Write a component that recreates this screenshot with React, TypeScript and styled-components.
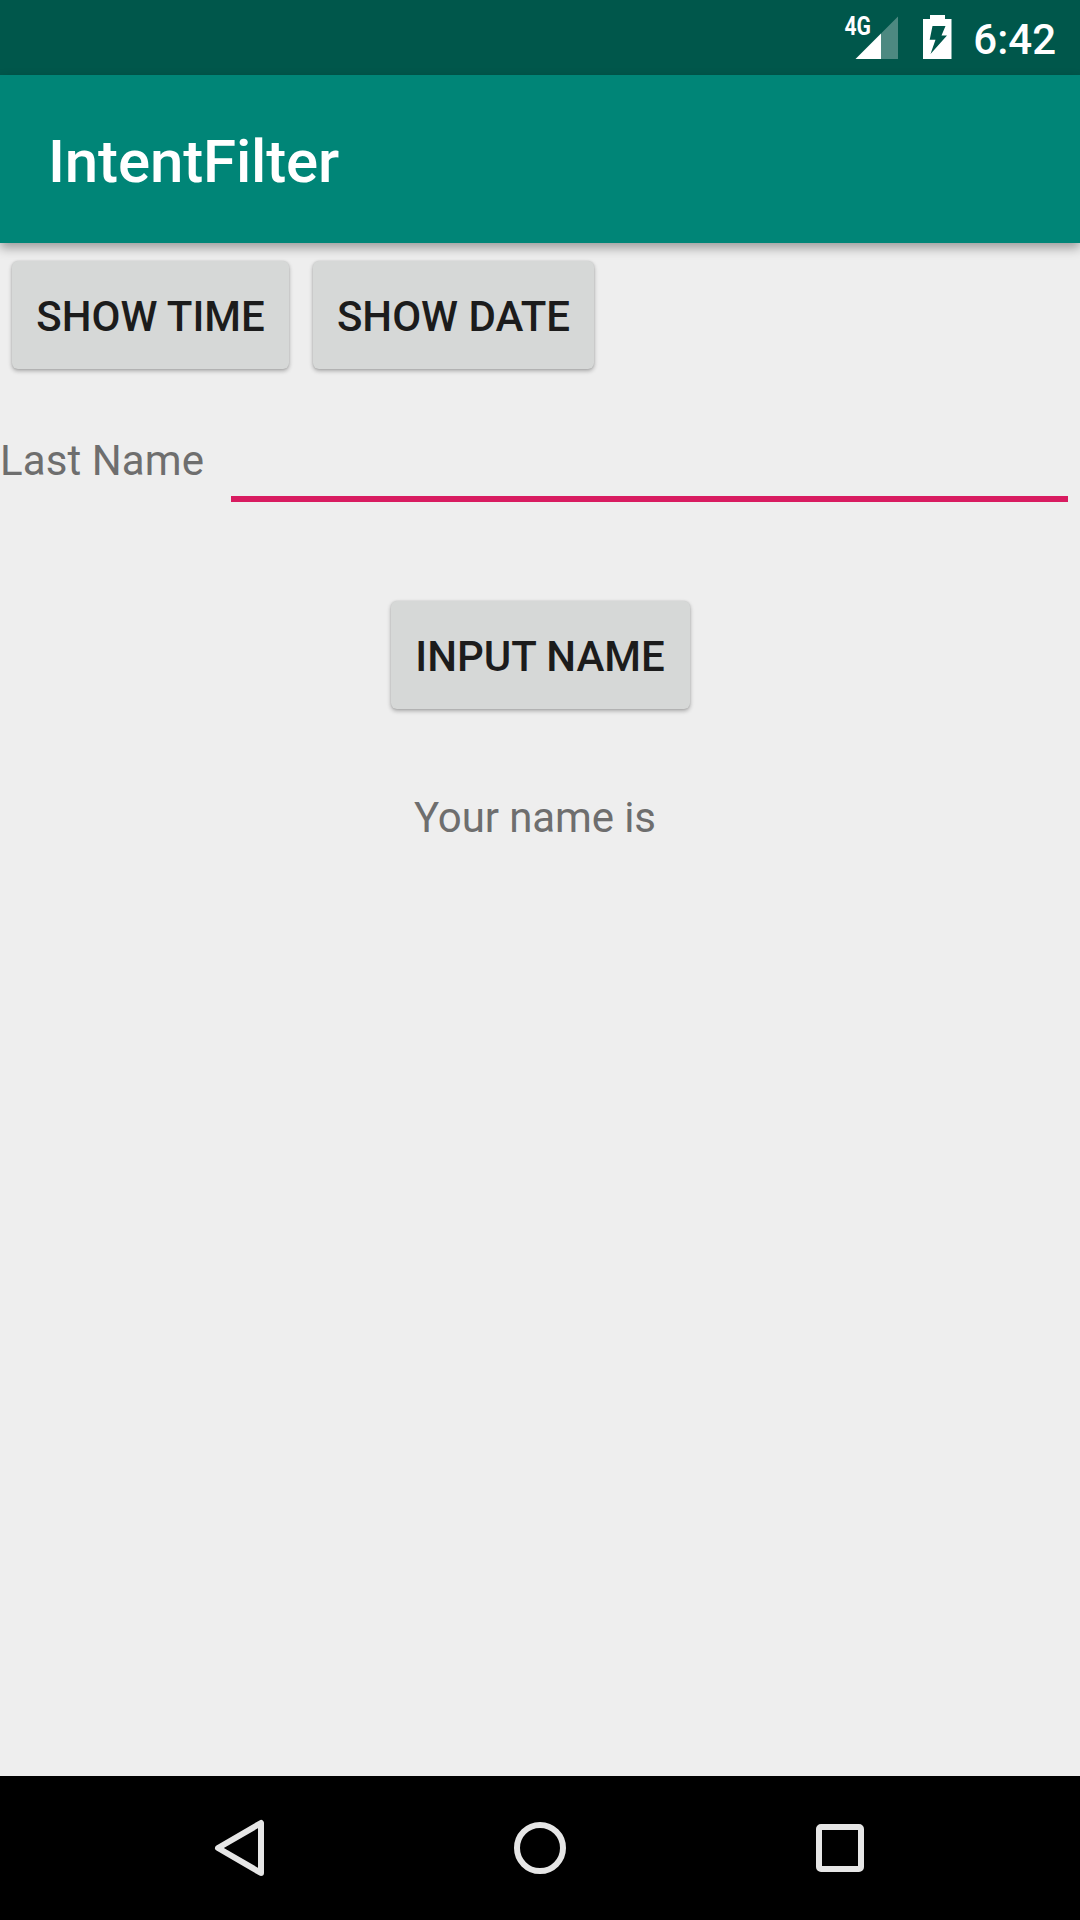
import React from "react";
import styled, { createGlobalStyle } from "styled-components";

const GlobalStyle = createGlobalStyle`
  * { box-sizing: border-box; }
  body { margin: 0; background: #eeeeee; font-family: Roboto, "Noto Sans", sans-serif; }
`;

const Screen = styled.div`
  width: 1080px;
  height: 1920px;
  display: flex;
  flex-direction: column;
  background: #eeeeee;
  overflow: hidden;
`;

const StatusBar = styled.header`
  flex: none;
  height: 75px;
  padding-right: 24px;
  display: flex;
  justify-content: flex-end;
  align-items: flex-start;
  background: #00574b;
  color: #ffffff;
`;

const StatusIcons = styled.svg`
  flex: none;
  display: block;
`;

const NetworkLabel = styled.text`
  font-family: Roboto, sans-serif;
  font-size: 25.5px;
  font-weight: 700;
  fill: #ffffff;
`;

const Clock = styled.time`
  margin: 15px 0 0 21px;
  font-size: 42px;
  font-weight: 500;
  line-height: 50px;
`;

const AppBar = styled.div`
  flex: none;
  height: 168px;
  padding: 5px 0 0 48px;
  display: flex;
  align-items: center;
  background: #008577;
  box-shadow: 0 5px 10px rgba(0, 0, 0, 0.34);
`;

const Title = styled.h1`
  margin: 0;
  color: #ffffff;
  font-size: 60px;
  font-weight: 500;
  line-height: 70px;
  letter-spacing: -0.15px;
`;

const Content = styled.main`
  flex: 1;
  display: flex;
  flex-direction: column;
`;

const ButtonRow = styled.div<{ $centered?: boolean }>`
  display: flex;
  justify-content: ${(p) => (p.$centered ? "center" : "flex-start")};
  gap: 24px;
  padding: 18px 12px;
`;

const Button = styled.button<{ $width: number }>`
  width: ${(p) => p.$width}px;
  height: 108px;
  padding: 4px 0 0;
  border: 0;
  border-radius: 6px;
  background: #d6d8d7;
  box-shadow: 0 2px 4px rgba(0, 0, 0, 0.3), 0 0 2px rgba(0, 0, 0, 0.12);
  color: #1c1c1c;
  font-family: inherit;
  font-size: 42px;
  font-weight: 500;
  line-height: 50px;
  text-transform: uppercase;
  white-space: nowrap;
`;

const FieldRow = styled.label`
  display: flex;
  align-items: flex-start;
  margin-top: 48px;
  height: 67px;
  padding-right: 12px;
  gap: 12px;
`;

const FieldLabel = styled.span`
  flex: none;
  width: 219px;
  padding-top: 1px;
  color: #6e6e6e;
  font-size: 42px;
  line-height: 50px;
  letter-spacing: 0.1px;
`;

const Input = styled.input`
  flex: 1;
  min-width: 0;
  height: 67px;
  padding: 0;
  border: 0;
  border-bottom: 6px solid #d81b60;
  background: transparent;
  outline: none;
  font-family: inherit;
  font-size: 54px;
`;

const Spacer = styled.div<{ $height: number }>`
  height: ${(p) => p.$height}px;
`;

const Result = styled.p`
  margin: 66px 0 0;
  padding-left: 414px;
  color: #6e6e6e;
  font-size: 42px;
  line-height: 50px;
  letter-spacing: -0.1px;
`;

const NavBar = styled.nav`
  flex: none;
  height: 144px;
  display: flex;
  justify-content: center;
  align-items: center;
  gap: 220px;
  background: #000000;
`;

const NavIcon = styled.svg`
  display: block;
  width: 80px;
  height: 80px;
  fill: none;
  stroke: #e6e6e6;
  stroke-width: 6;
  stroke-linejoin: round;
`;

export default function App() {
  return (
    <Screen>
      <GlobalStyle />
      <StatusBar>
        <StatusIcons width="110" height="75" viewBox="842 0 110 75">
          <NetworkLabel x="844.5" y="35.3" textLength="26.5" lengthAdjust="spacingAndGlyphs">4G</NetworkLabel>
          <path d="M898 16.5V59H881V33.5Z" fill="#ffffff" fillOpacity="0.3" />
          <path d="M881 33.5V59H855.5Z" fill="#ffffff" />
          <path
            d="M930 15h15v4h6.5v40H923V19h7ZM932.5 26 929.7 39.7H935.5L930.5 54 947 35.5H941.5L945.5 26Z"
            fill="#ffffff"
            fillRule="evenodd"
          />
        </StatusIcons>
        <Clock>6:42</Clock>
      </StatusBar>
      <AppBar>
        <Title>IntentFilter</Title>
      </AppBar>
      <Content>
        <ButtonRow>
          <Button $width={277}>Show time</Button>
          <Button $width={281}>Show date</Button>
        </ButtonRow>
        <FieldRow>
          <FieldLabel>Last Name</FieldLabel>
          <Input aria-label="Last Name" />
        </FieldRow>
        <Spacer $height={81} />
        <ButtonRow $centered>
          <Button $width={299}>Input name</Button>
        </ButtonRow>
        <Result>Your name is</Result>
      </Content>
      <NavBar>
        <NavIcon viewBox="200 1808 80 80">
          <path d="M218 1848 261 1823V1873Z" />
        </NavIcon>
        <NavIcon viewBox="500 1808 80 80">
          <circle cx="540" cy="1848" r="23" />
        </NavIcon>
        <NavIcon viewBox="800 1808 80 80">
          <rect x="819" y="1827" width="42" height="42" rx="2" />
        </NavIcon>
      </NavBar>
    </Screen>
  );
}
